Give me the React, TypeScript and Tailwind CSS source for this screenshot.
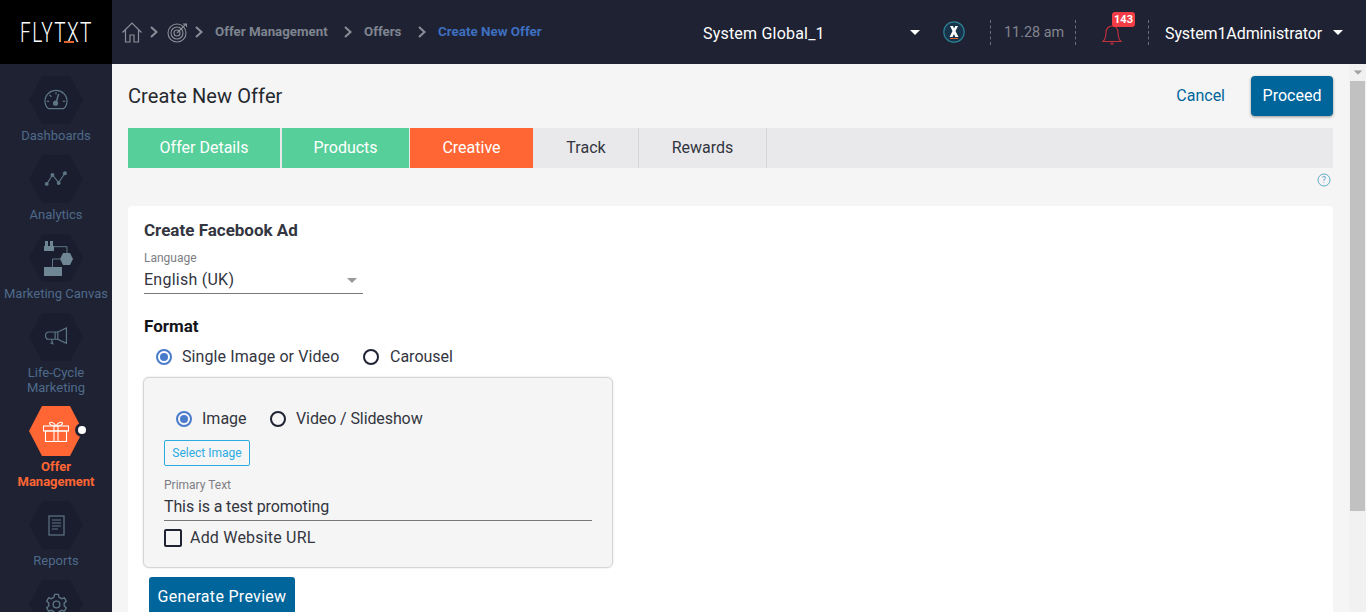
import React from "react";

const Hex = ({ active, children }: { active?: boolean; children: React.ReactNode }) => (
  <div className={active ? "relative w-[54px] h-[50px]" : "relative w-[54px] h-[48px]"}>
    <svg viewBox="0 0 54 48" preserveAspectRatio="none" className="absolute inset-0 w-full h-full">
      <path d="M13 0H41L54 24L41 48H13L0 24Z" fill={active ? "#ff6633" : "#191d2d"} />
    </svg>
    <div className="absolute inset-0 flex items-center justify-center">{children}</div>
    {active && (
      <div className="absolute right-[-6px] top-[17px] w-[14px] h-[14px] rounded-full bg-[#1e2233] flex items-center justify-center">
        <div className="w-[8px] h-[8px] rounded-full bg-white" />
      </div>
    )}
  </div>
);

const S = "#5d7585";

const Dash = () => (
  <svg width="24" height="22" viewBox="0 0 26 24" fill="none" stroke={S} strokeWidth="1.3">
    <path d="M5 21.5C2.5 19.5 1 16.5 1 13.5C1 6.5 6.5 1.5 13 1.5S25 6.5 25 13.5C25 16.5 23.5 19.5 21 21.5Z" />
    <path d="M3 13.5H5.5M20.5 13.5H23M6 6.5L8 8.5M13 3.5V6" />
    <path d="M13 15L16 5.5" strokeWidth="1.6" />
    <circle cx="12.5" cy="15.5" r="2.2" fill={S} />
  </svg>
);
const Ana = () => (
  <svg width="24" height="16" viewBox="0 0 26 18" fill="none" stroke={S} strokeWidth="1.3">
    <path d="M3 14L9 4.5L16 13L23 2.5" />
    <g fill={S} stroke="none">
      <circle cx="2.5" cy="14.5" r="2.2" /><circle cx="9" cy="4.5" r="2.2" />
      <circle cx="16" cy="13.5" r="2.2" /><circle cx="23" cy="2.5" r="2.2" />
    </g>
  </svg>
);
const Canvas = () => (
  <svg width="29" height="35" viewBox="0 0 29 35" fill="none" stroke={S} strokeWidth="1" className="ml-[5px]">
    <g fill="#6f8795" stroke="none">
      <rect x="0" y="5" width="10" height="5" /><rect x="1" y="0" width="3" height="5" /><rect x="6" y="0" width="3" height="5" />
      <path d="M19 12H26L29 18L26 24H19L16 18Z" />
      <rect x="0" y="26" width="18" height="9" />
    </g>
    <path d="M10 5.7H23V12M16 18H8.5V26" />
  </svg>
);
const Mega = () => (
  <svg width="24" height="20" viewBox="0 0 26 22" fill="none" stroke={S} strokeWidth="1.3">
    <path d="M15 5.5L24.5 1V18L15 13.5Z" />
    <path d="M15 5.5H5.5C3 5.5 1.5 7.2 1.5 9.5S3 13.5 5.5 13.5H15" />
    <path d="M8 13.5L9.5 18.5L7 17.5" />
    <path d="M12 5.5V13.5" />
  </svg>
);
const Gift = () => (
  <svg width="26" height="21" viewBox="0 0 26 21" fill="none" stroke="#fff" strokeWidth="1.1">
    <rect x="0.5" y="5" width="25" height="5" />
    <rect x="2.5" y="10" width="21" height="10.5" />
    <path d="M11 5V20.5M15 5V20.5" />
    <path d="M13 5C10 5 6.5 4 6.5 2.5S10 0 13 5C16 0 19.5 1 19.5 2.5S16 5 13 5Z" />
  </svg>
);
const Rep = () => (
  <svg width="17" height="21" viewBox="0 0 17 21" fill="none" stroke={S} strokeWidth="1.2">
    <rect x="1" y="1" width="15" height="19" />
    <path d="M4 5H13M4 8H13M4 11H13M4 14H10" />
  </svg>
);
const Gear = () => (
  <svg width="23" height="23" viewBox="0 0 24 24" fill="none" stroke={S} strokeWidth="1.4">
    <path d="M10 1.5H14L14.7 4.5L17.3 5.9L20.2 5L22.2 8.5L20 10.6V13.4L22.2 15.5L20.2 19L17.3 18.1L14.7 19.5L14 22.5H10L9.3 19.5L6.7 18.1L3.8 19L1.8 15.5L4 13.4V10.6L1.8 8.5L3.8 5L6.7 5.9L9.3 4.5Z" />
    <circle cx="12" cy="12" r="3.5" />
  </svg>
);

const Chev = ({ className }: { className: string }) => (
  <svg width="8" height="12" viewBox="0 0 8 12" fill="none" stroke="#8c8f98" strokeWidth="2" className={"shrink-0 " + className}>
    <path d="M1 1L6.5 6L1 11" />
  </svg>
);
const Caret = ({ className, color = "#fff" }: { className: string; color?: string }) => (
  <svg width="10" height="5" viewBox="0 0 10 5" className={"shrink-0 " + className}>
    <path d="M0 0H10L5 5Z" fill={color} />
  </svg>
);
const Divider = ({ className }: { className: string }) => (
  <div className={"h-[25px] border-l border-dashed border-[#6b6f7b] " + className} />
);

const Radio = ({ on, className = "" }: { on?: boolean; className?: string }) =>
  on ? (
    <span className={"w-4 h-4 rounded-full border-2 border-[#4a7bcb] flex items-center justify-center shrink-0 " + className}>
      <span className="w-2 h-2 rounded-full bg-[#4a7bcb]" />
    </span>
  ) : (
    <span className={"w-4 h-4 rounded-full border-2 border-[#1e2233] shrink-0 " + className} />
  );

const nav = [
  { icon: <Dash />, label: ["Dashboards"] },
  { icon: <Ana />, label: ["Analytics"] },
  { icon: <Canvas />, label: ["Marketing Canvas"] },
  { icon: <Mega />, label: ["Life-Cycle", "Marketing"], two: true },
  { icon: <Gift />, label: ["Offer", "Management"], active: true },
  { icon: <Rep />, label: ["Reports"] },
  { icon: <Gear />, label: [] as string[] },
];

export default function App() {
  return (
    <div className="w-[1366px] h-[612px] overflow-hidden flex flex-col bg-[#f5f5f5] text-[#33353f] font-['Roboto',sans-serif]">
      <header className="h-16 shrink-0 bg-[#1e2233] flex items-center">
        <div className="w-[112px] h-16 bg-black flex items-center justify-center shrink-0 relative overflow-hidden">
          <span className="mt-[2px] text-white text-[28px] leading-none font-light font-['Roboto',sans-serif] tracking-[2px] scale-x-[0.68] whitespace-nowrap">FLYTXT</span>
          <span className="absolute left-[64px] top-[41px] w-[10px] h-[2px] bg-[#e0622d]" />
        </div>
        <svg width="20" height="21" viewBox="0 0 20 21" fill="none" stroke="#8c8f98" strokeWidth="1.2" className="ml-[10px] shrink-0">
          <path d="M0.5 10.5L10 1L19.5 10.5M3.5 8V20H8V13H12V20H16.5V8" />
        </svg>
        <Chev className="ml-[8px]" />
        <svg width="21" height="21" viewBox="0 0 21 21" fill="none" stroke="#8c8f98" strokeWidth="1.1" className="ml-[9px] shrink-0">
          <circle cx="10" cy="11" r="9" /><circle cx="10" cy="11" r="6" /><circle cx="10" cy="11" r="3" />
          <path d="M10 11L19 2M16 2H19.5V5" />
        </svg>
        <Chev className="ml-[7px]" />
        <span className="ml-[12px] w-[112px] whitespace-nowrap text-[13.3px] font-bold text-[#7f8590]">Offer Management</span>
        <Chev className="ml-[17px]" />
        <span className="ml-[12px] w-[37px] whitespace-nowrap text-[13.3px] font-bold text-[#7f8590]">Offers</span>
        <Chev className="ml-[17px]" />
        <span className="ml-[12px] w-[104px] whitespace-nowrap text-[13.4px] font-bold text-[#3f6fc0]">Create New Offer</span>
        <span className="ml-[161px] mt-[3px] text-base text-white w-[121px] tracking-[0.2px] whitespace-nowrap">System Global_1</span>
        <Caret className="ml-[86px]" />
        <svg width="22" height="22" viewBox="0 0 22 22" className="ml-[23px] shrink-0">
          <circle cx="11" cy="11" r="10.2" fill="#17344a" stroke="#2c7f92" strokeWidth="1.2" />
          <path d="M7 5H10L11 7.5L12.3 5H15L12.5 10L15.5 16H12.3L11 13L9.5 16H6.5L9.5 10Z" fill="#fff" />
          <rect x="7" y="17" width="8" height="1" fill="#e0622d" />
        </svg>
        <Divider className="ml-[25px]" />
        <span className="ml-[13px] mt-[1px] w-[59px] text-[14.4px] text-[#82858f] whitespace-nowrap">11.28 am</span>
        <Divider className="ml-[12px]" />
        <div className="relative ml-[26px] w-[20px] h-[26px] flex items-end shrink-0">
          <svg width="20" height="22" viewBox="0 0 20 22" fill="none" stroke="#c4303b" strokeWidth="1.1">
            <path d="M1 18.5C3.5 16 4 13 4 9.5C4 5.5 6.5 3 10 3S16 5.5 16 9.5C16 13 16.5 16 19 18.5Z" />
            <path d="M9 19.5V21H11V19.5" />
          </svg>
          <span className="absolute left-[10px] top-[-7px] w-[23px] h-[15px] rounded-[3px] bg-[#f23d46] text-white text-[11px] font-bold leading-[15px] text-center">143</span>
        </div>
        <Divider className="ml-[26px]" />
        <span className="ml-[16px] mt-[3px] w-[157px] text-base text-white tracking-[-0.1px] whitespace-nowrap">System1Administrator</span>
        <Caret className="ml-[11px]" />
      </header>

      <div className="flex flex-1 min-h-0">
        <nav className="w-[112px] shrink-0 bg-[#1e2233] flex flex-col items-center gap-3 pt-3 overflow-hidden">
          {nav.map((n, i) => (
            <div key={i} className={n.two ? "flex flex-col items-center shrink-0 -mb-px" : "flex flex-col items-center shrink-0"}>
              <Hex active={n.active}>{n.icon}</Hex>
              {n.label.length > 0 && (
                <div className={n.active ? "mt-[3px] text-center text-[13px] leading-[15px] whitespace-nowrap font-bold text-[#ff6633]" : "mt-[4px] text-center text-[13px] leading-[15px] whitespace-nowrap text-[#4f6a8a]"}>
                  {n.label.map((l) => (
                    <div key={l}>{l}</div>
                  ))}
                </div>
              )}
            </div>
          ))}
        </nav>

        <main className="flex-1 min-w-0 pl-4 pr-4 pt-3">
          <div className="flex items-center h-10">
            <h1 className="text-xl text-[#26282f] tracking-[0.1px]">Create New Offer</h1>
            <span className="ml-auto text-base text-[#00659b]">Cancel</span>
            <button className="ml-[26px] w-[82px] h-10 rounded bg-[#00659b] text-white text-base shadow-[0_1px_3px_rgba(0,0,0,0.4)]">Proceed</button>
          </div>
          <div className="mt-3 h-10 bg-[#e9e9eb] flex text-base">
            <div className="w-[153px] bg-[#57cf9a] text-white flex items-center justify-center border-r border-[#e9e9eb]">Offer Details</div>
            <div className="ml-[1px] w-[127px] bg-[#57cf9a] text-white flex items-center justify-center">Products</div>
            <div className="ml-[1px] w-[123px] bg-[#ff6633] text-white flex items-center justify-center">Creative</div>
            <div className="ml-[1px] w-[105px] flex items-center justify-center border-r border-[#d6d6d8]">Track</div>
            <div className="w-[128px] flex items-center justify-center border-r border-[#d6d6d8]">Rewards</div>
          </div>
          <div className="flex justify-end h-[38px] pt-[5px] pr-[2px]">
            <svg width="14" height="14" viewBox="0 0 14 14" fill="none">
              <circle cx="7" cy="7" r="6" stroke="#5fa8cf" />
              <text x="7" y="10" textAnchor="middle" fontSize="9" fill="#5fa8cf" fontFamily="Roboto">?</text>
            </svg>
          </div>
          <section className="bg-white rounded-t-sm pl-4 pr-4 pt-[14px] h-[500px]">
            <h2 className="text-[17px] font-bold text-[#33353f] leading-5">Create Facebook Ad</h2>
            <div className="mt-[11px] text-xs text-[#7d7d83] leading-[14px]">Language</div>
            <div className="mt-[5px] w-[219px] h-[24px] border-b border-[#77777c] flex items-start justify-between pr-[6px] text-base leading-5 text-[#33353f]">
              <span className="tracking-[0.25px]">English (UK)</span>
              <Caret color="#9a9a9a" className="mt-[8px]" />
            </div>
            <h3 className="mt-[22px] text-[17px] font-bold text-[#14151a] leading-5">Format</h3>
            <div className="mt-[11px] ml-3 flex items-center h-5 text-base">
              <Radio on /><span className="ml-[10px] w-[157px] whitespace-nowrap tracking-[0.1px]">Single Image or Video</span>
              <Radio className="ml-[24px]" /><span className="ml-[11px]">Carousel</span>
            </div>
            <div className="mt-[10px] -ml-[1px] w-[470px] h-[191px] rounded-md bg-[#f5f5f5] border border-[#d5d5d5] shadow-[0_0_2px_rgba(0,0,0,0.15)] pl-5 pr-5 pt-[31px]">
              <div className="ml-3 flex items-center h-5 text-base">
                <Radio on /><span className="ml-[10px] w-[44px]">Image</span>
                <Radio className="ml-6" /><span className="ml-[10px] tracking-[-0.1px]">Video / Slideshow</span>
              </div>
              <button className="block mt-[11px] w-[86px] h-[26px] rounded-[2px] border border-[#2cabe3] text-[#2cabe3] text-xs">Select Image</button>
              <div className="mt-3 text-xs text-[#7d7d83] leading-[14px]">Primary Text</div>
              <div className="mt-[5px] h-[20px] box-content pb-[3px] border-b border-[#77777c] text-base leading-5 tracking-[-0.12px]">This is a test promoting</div>
              <label className="mt-[7px] flex items-center h-5 text-base">
                <span className="w-[18px] h-[18px] border-2 border-[#1e2233] rounded-[2px]" />
                <span className="ml-2 tracking-[0.2px]">Add Website URL</span>
              </label>
            </div>
            <button className="mt-[9px] ml-[5px] w-[146px] h-10 rounded-t-[3px] bg-[#00659b] text-white text-base tracking-[0.3px]">Generate Preview</button>
          </section>
        </main>

        <div className="w-[17px] shrink-0 bg-[#f1f1f1] flex flex-col items-center">
          <Caret color="#a3a3a3" className="mt-[6px] scale-90" />
          <div className="mt-[6px] w-[15px] h-[430px] bg-[#c1c1c1]" />
        </div>
      </div>
    </div>
  );
}
